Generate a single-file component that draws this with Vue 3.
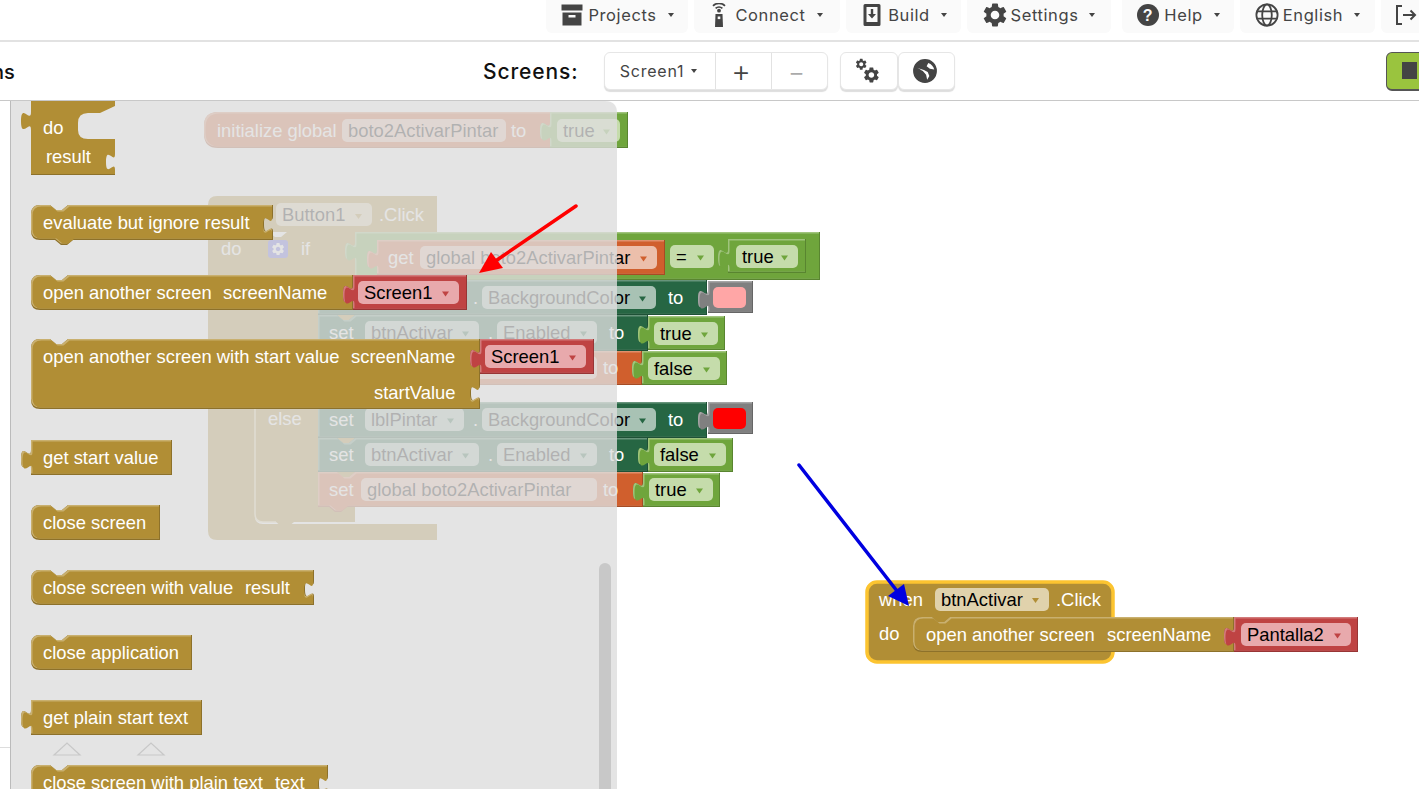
<script setup>
const COL = {
  gold: ['#B18E35', '#c9b06f', '#8d712a'],
  red: ['#BF4343', '#d27b7b', '#983535'],
  green: ['#6FA53C', '#a0c47d', '#598530'],
  orange: ['#D05F2D', '#e0906c', '#a64c24'],
  teal: ['#266643', '#67947b', '#1e5136'],
  gray: ['#808080', '#a6a6a6', '#666666']
}
const FIELD = { gold: '#e0d2ac', red: '#e8a9ac', green: '#c5dcab', orange: '#ecbfab', teal: '#a8c2b4', gray: '#cccccc' }

function shape(b, dx = 0, dy = 0, dw = 0, dh = 0) {
  const x = b.x + dx, y = b.y + dy, w = b.w + dw, h = b.h + dh
  const r = b.round === true ? 9 : b.round
  let d = r ? `M${x},${y + r} Q${x},${y} ${x + r},${y}` : `M${x},${y}`
  if (b.notch) d += ` H${x + 19} l6,5 h6 l6,-5`
  d += ` H${x + w}`
  for (const s of b.sockets || []) {
    d += ` V${y + s} v4 c0,11 -9,-9 -9,8 s9,-3 9,8`
  }
  d += ` V${y + h}`
  if (b.drop) d += ` H${x + b.drop + 18} l-6,5 h-6 l-6,-5`
  if (r) d += ` H${x + r} Q${x},${y + h} ${x},${y + h - r}`
  else d += ` H${x}`
  if (b.tab !== undefined) d += ` V${y + b.tab + 21} c0,-12 -10,10 -10,-9 s10,3 10,-9`
  return d + ' Z'
}

function block(color, x, y, w, h, opts = {}, labels = [], fields = []) {
  const b = { color, x, y, w, h, ...opts, labels, fields }
  const off = opts.row ?? 0
  b.fill = COL[color]
  b.outer = shape(b)
  b.light = shape(b, 0, 0, -1, -1.5)
  b.inner = shape(b, 1.5, 1.5, -2.5, -3)
  b.base = y + off + 23.5
  b.fieldFill = FIELD[color]
  b.fieldTop = y + off + 6
  return b
}
const L = (x, t) => ({ x, t })
const F = (x, w, t, arrow = true) => ({ x, w, t, arrow })

const eventPath = 'M208,205 Q208,196 217,196 H437 V232 H255 V516 Q255,524 263,524 H437 V540 H217 Q208,540 208,531 Z'
const ifPath = 'M255,240 Q255,232 263,232 H269 l6,5 h6 l6,-5 H355 V522 H294 l-6,5 h-6 l-6,-5 H263 Q255,522 255,514 Z'
const doPath = 'M31,95 H115 V106 L100,113 H88 Q78,113 78,123 V130 Q78,139 88,139 H115 V150 v4 c0,11 -9,-9 -9,8 s9,-3 9,8 V174 H31 V130 c0,-12 -10,10 -10,-9 s10,3 10,-9 Z'

const behind = [
  block('orange', 204, 112, 350, 36, { round: 14, row: 1 }, [L(217, 'initialize global'), L(511, 'to')], [F(342, 164, 'boto2ActivarPintar', false)]),
  block('green', 550, 112, 78, 36, { tab: 7, row: 1 }, [], [F(557, 63, 'true')]),
  block('green', 355, 232, 465, 48, { tab: 7, row: 7 }, [], [F(670, 44, '=')]),
  block('orange', 377, 240, 288, 35, { tab: 7 }, [L(388, 'get')], [F(420, 237, 'global boto2ActivarPintar')]),
  block('green', 728, 239, 78, 34, { tab: 7 }, [], [F(736, 62, 'true')]),
  block('teal', 318, 280, 389, 35, { notch: true }, [L(329, 'set'), L(473, '.'), L(668, 'to')], [F(365, 99, 'lblPintar'), F(482, 174, 'BackgroundColor')]),
  block('gray', 708, 281, 45, 32, { tab: 6 }, [], []),
  block('teal', 318, 315, 330, 36, { notch: true }, [L(329, 'set'), L(488, '.'), L(609, 'to')], [F(365, 114, 'btnActivar'), F(497, 100, 'Enabled')]),
  block('green', 648, 316, 77, 34, { tab: 6 }, [], [F(654, 64, 'true')]),
  block('orange', 318, 351, 324, 34, { notch: true, row: -1 }, [L(329, 'set'), L(603, 'to')], [F(361, 236, 'global boto2ActivarPintar')]),
  block('green', 642, 351, 85, 34, { tab: 6 }, [], [F(648, 72, 'false')]),
  block('teal', 318, 402, 389, 36, {}, [L(329, 'set'), L(473, '.'), L(668, 'to')], [F(365, 99, 'lblPintar'), F(482, 174, 'BackgroundColor')]),
  block('gray', 708, 402, 45, 32, { tab: 6 }, [], []),
  block('teal', 318, 438, 330, 34, { notch: true, row: -1 }, [L(329, 'set'), L(488, '.'), L(609, 'to')], [F(365, 114, 'btnActivar'), F(497, 100, 'Enabled')]),
  block('green', 648, 438, 85, 34, { tab: 6, row: -1 }, [], [F(654, 72, 'false')]),
  block('orange', 318, 472, 325, 35, { notch: true, drop: 11 }, [L(329, 'set'), L(603, 'to')], [F(361, 236, 'global boto2ActivarPintar', false)]),
  block('green', 643, 473, 77, 34, { tab: 6, row: -1 }, [], [F(649, 64, 'true')])
]

const palette = [
  block('gold', 31, 205, 242, 35, { round: true, notch: true, drop: 24, sockets: [7] }, [L(43, 'evaluate but ignore result')]),
  block('gold', 31, 275, 322, 35, { round: true, notch: true }, [L(43, 'open another screen'), L(223, 'screenName')]),
  block('red', 353, 275, 114, 35, { tab: 7 }, [], [F(358, 101, 'Screen1')]),
  block('gold', 31, 339, 449, 70, { round: true, notch: true, sockets: [42] }, [L(43, 'open another screen with start value'), L(351, 'screenName')]),
  block('red', 480, 339, 114, 35, { tab: 7 }, [], [F(485, 101, 'Screen1')]),
  block('gold', 31, 440, 141, 35, { tab: 7 }, [L(43, 'get start value')]),
  block('gold', 31, 505, 129, 35, { round: true, notch: true }, [L(43, 'close screen')]),
  block('gold', 31, 570, 283, 35, { round: true, notch: true, sockets: [7] }, [L(43, 'close screen with value'), L(245, 'result')]),
  block('gold', 31, 635, 161, 35, { round: true, notch: true }, [L(43, 'close application')]),
  block('gold', 31, 700, 171, 35, { tab: 7 }, [L(43, 'get plain start text')]),
  block('gold', 31, 765, 297, 35, { round: true, notch: true, sockets: [7] }, [L(43, 'close screen with plain text'), L(275, 'text')])
]

const when = [
  block('gold', 913, 617, 321, 35, { round: true, notch: true }, [L(926, 'open another screen'), L(1107, 'screenName')]),
  block('red', 1234, 617, 124, 35, { tab: 7 }, [], [F(1241, 110, 'Pantalla2')])
]

const nav = [
  { label: 'Projects', icon: 'box', cls: 'w-projects' },
  { label: 'Connect', icon: 'tower', cls: 'w-connect' },
  { label: 'Build', icon: 'phone', cls: 'w-build' },
  { label: 'Settings', icon: 'gear', cls: 'w-settings' },
  { label: 'Help', icon: 'help', cls: 'w-help' },
  { label: 'English', icon: 'globe', cls: 'w-english' }
]
const GEAR = 'M19.14 12.94c.04-.3.06-.61.06-.94 0-.32-.02-.64-.07-.94l2.03-1.58a.49.49 0 0 0 .12-.61l-1.92-3.32a.488.488 0 0 0-.59-.22l-2.39.96c-.5-.38-1.03-.7-1.62-.94l-.36-2.54a.484.484 0 0 0-.48-.41h-3.84c-.24 0-.43.17-.47.41l-.36 2.54c-.59.24-1.13.57-1.62.94l-2.39-.96c-.22-.08-.47 0-.59.22L2.74 8.87c-.12.21-.08.47.12.61l2.03 1.58c-.05.3-.09.63-.09.94s.02.64.07.94l-2.03 1.58a.49.49 0 0 0-.12.61l1.92 3.32c.12.22.37.29.59.22l2.39-.96c.5.38 1.03.7 1.62.94l.36 2.54c.05.24.24.41.48.41h3.84c.24 0 .44-.17.47-.41l.36-2.54c.59-.24 1.13-.56 1.62-.94l2.39.96c.22.08.47 0 .59-.22l1.92-3.32c.12-.22.07-.47-.12-.61l-2.01-1.58zM12 15.6c-1.98 0-3.6-1.62-3.6-3.6s1.62-3.6 3.6-3.6 3.6 1.62 3.6 3.6-1.62 3.6-3.6 3.6z'
</script>

<template>
  <div class="page">
    <header class="nav">
      <button v-for="n in nav" :key="n.label" class="nav-btn" :class="n.cls">
        <svg class="ico" viewBox="0 0 24 24">
          <template v-if="n.icon === 'box'">
            <path d="M1.5 1.5h21v6h-21z" />
            <path fill-rule="evenodd" d="M2.5 9.5h19v13h-19zM8.5 12v2.5h7V12z" />
          </template>
          <template v-else-if="n.icon === 'tower'">
            <path d="M8.5 11h7l.5 13H8z" />
            <rect x="10.7" y="13.5" width="2.6" height="2.6" fill="#fafafa" />
            <circle cx="12" cy="7.7" r="1.9" />
            <path class="line" d="M8.6 5.4a5 5 0 0 1 6.8 0M6 2.8a8.6 8.6 0 0 1 12 0" stroke-width="1.7" />
          </template>
          <template v-else-if="n.icon === 'phone'">
            <path fill-rule="evenodd" d="M5 1h14a1.5 1.5 0 0 1 1.5 1.5v19A1.5 1.5 0 0 1 19 23H5a1.5 1.5 0 0 1-1.5-1.5v-19A1.5 1.5 0 0 1 5 1zM6.5 4v15h11V4z" />
            <path d="M10.8 6h2.4v5h2.8L12 15.5 8 11h2.8z" />
          </template>
          <path v-else-if="n.icon === 'gear'" :d="GEAR" transform="translate(-2.4 -2.4) scale(1.2)" />
          <template v-else-if="n.icon === 'help'">
            <circle cx="12" cy="12" r="11" />
            <text x="12" y="18" class="qmark">?</text>
          </template>
          <g v-else class="line" stroke-width="1.8">
            <circle cx="12" cy="12" r="10.6" />
            <ellipse cx="12" cy="12" rx="4.8" ry="10.6" />
            <path d="M1.6 8.4h20.8M1.6 15.6h20.8" />
          </g>
        </svg>
        <span>{{ n.label }}</span>
        <i class="caret"></i>
      </button>
      <button class="nav-btn logout">
        <svg class="ico" viewBox="0 0 24 24">
          <path class="line" stroke-width="2" d="M8 3H3v18h5M9 12h12M16.5 7.5L21 12l-4.5 4.5" />
        </svg>
      </button>
    </header>

    <div class="toolbar">
      <span class="cut">ns</span>
      <span class="screens">Screens:</span>
      <div class="group">
        <div class="cell pick">Screen1<i class="caret"></i></div>
        <div class="cell plus">+</div>
        <div class="cell minus">−</div>
      </div>
      <div class="tool first">
        <svg class="tool-ico" viewBox="0 0 24 24">
          <path :d="GEAR" transform="translate(6.5 7) scale(.72)" />
          <path :d="GEAR" transform="translate(-.5 -.5) scale(.52)" />
        </svg>
      </div>
      <div class="tool">
        <svg class="tool-ico" viewBox="0 0 24 24">
          <path fill-rule="evenodd" d="M12 1a11 11 0 1 1 0 22 11 11 0 0 1 0-22zM4.5 9c2.500.5 3.500 2.500 5.500 3l3 3.500 1 4.500 2-3.500-1.500-3.500-3.500-2zM15 4.500l-1.500 3 3 2.500 4 .5c-.5-2.500-2.500-5-5.500-6z" />
        </svg>
      </div>
      <div class="run"><i></i></div>
    </div>

    <svg class="canvas" viewBox="0 101 1419 688">
      <!-- workspace -->
      <path :d="eventPath" fill="#B18E35" />
      <path :d="ifPath" fill="#B18E35" />
      <path d="M255,400 V514 Q255,522 263,522 H276" fill="none" stroke="#e8d9a8" stroke-width="1.5" />
      <rect x="276" y="203" width="96" height="23" rx="5" fill="#e0d2ac" />
      <text x="282" y="221" class="ft">Button1</text>
      <path d="M355,214 h7 l-3.5,5 z" fill="#B18E35" />
      <text x="379" y="221" class="bt">.Click</text>
      <text x="221" y="255" class="bt">do</text>
      <rect x="268" y="240" width="20" height="18" rx="3" fill="#5a5ae0" />
      <path :d="GEAR" fill="#fff" transform="translate(270.5 241.500) scale(.63)" />
      <text x="301" y="255" class="bt">if</text>
      <text x="268" y="425" class="bt">else</text>

      <g v-for="(b, i) in behind" :key="'b' + i">
        <path :d="b.outer" :fill="b.fill[2]" />
        <path :d="b.light" :fill="b.fill[1]" />
        <path :d="b.inner" :fill="b.fill[0]" />
        <text v-for="l in b.labels" :key="l.t + l.x" :x="l.x" :y="b.base" class="bt">{{ l.t }}</text>
        <g v-for="f in b.fields" :key="f.t + f.x">
          <rect :x="f.x" :y="b.fieldTop" :width="f.w" height="23" rx="5" :fill="b.fieldFill" />
          <text :x="f.x + 6" :y="b.base" class="ft">{{ f.t }}</text>
          <path v-if="f.arrow" :d="`M${f.x + f.w - 17},${b.base - 7} h7 l-3.5,5 z`" :fill="b.fill[0]" />
        </g>
      </g>
      <rect x="713" y="287" width="33" height="21" rx="5" fill="#ffa6a6" />
      <rect x="713" y="408" width="33" height="21" rx="5" fill="#ff0000" />

      <!-- selected event -->
      <rect x="867" y="582" width="246" height="80" rx="10" fill="#B18E35" stroke="#fcc430" stroke-width="3.5" />
      <rect x="935" y="588" width="114" height="23" rx="5" fill="#e0d2ac" />
      <text x="879" y="606" class="bt">when</text>
      <text x="941" y="606" class="ft">btnActivar</text>
      <path d="M1032,598 h7 l-3.5,5 z" fill="#B18E35" />
      <text x="1056" y="606" class="bt">.Click</text>
      <text x="879" y="640" class="bt">do</text>
      <g v-for="(b, i) in when" :key="'w' + i">
        <path :d="b.outer" :fill="b.fill[2]" />
        <path :d="b.light" :fill="b.fill[1]" />
        <path :d="b.inner" :fill="b.fill[0]" />
        <text v-for="l in b.labels" :key="l.t" :x="l.x" :y="b.base" class="bt">{{ l.t }}</text>
        <g v-for="f in b.fields" :key="f.t">
          <rect :x="f.x" :y="b.fieldTop" :width="f.w" height="23" rx="5" :fill="b.fieldFill" />
          <text :x="f.x + 6" :y="b.base" class="ft">{{ f.t }}</text>
          <path :d="`M${f.x + f.w - 17},${b.base - 7} h7 l-3.5,5 z`" :fill="b.fill[0]" />
        </g>
      </g>

      <!-- left gutter -->
      <path d="M0,747.5 H10" stroke="#ddd" />

      <!-- flyout -->
      <path d="M11,101 H605 Q617,101 617,113 V789 H11 Z" fill="#dddddd" fill-opacity=".8" />
      <path d="M10.5,101 V789" stroke="#bbb" />
      <rect x="599" y="563" width="12" height="240" rx="6" fill="#c8c8c8" />
      <g fill="none" stroke="#c8c8c8" stroke-width="1.2">
        <path d="M54,755 L67,743 L80,755 Z" />
        <path d="M138,755 L151,743 L164,755 Z" />
      </g>

      <path d="M31,172 H115 V175 H31 Z" fill="#8d712a" />
      <path :d="doPath" fill="#B18E35" />
      <text x="43" y="134" class="bt">do</text>
      <text x="46" y="163" class="bt">result</text>

      <g v-for="(b, i) in palette" :key="'p' + i">
        <path :d="b.outer" :fill="b.fill[2]" />
        <path :d="b.light" :fill="b.fill[1]" />
        <path :d="b.inner" :fill="b.fill[0]" />
        <text v-for="l in b.labels" :key="l.t" :x="l.x" :y="b.base" class="bt">{{ l.t }}</text>
        <g v-for="f in b.fields" :key="f.t">
          <rect :x="f.x" :y="b.fieldTop" :width="f.w" height="23" rx="5" :fill="b.fieldFill" />
          <text :x="f.x + 6" :y="b.base" class="ft">{{ f.t }}</text>
          <path :d="`M${f.x + f.w - 17},${b.base - 7} h7 l-3.5,5 z`" :fill="b.fill[0]" />
        </g>
      </g>
      <text x="374" y="399" class="bt">startValue</text>

      <!-- annotations -->
      <path d="M576,206 L497,260" stroke="#f00" stroke-width="3.5" stroke-linecap="round" />
      <path d="M479,273 L491,252 L503,268 Z" fill="#f00" />
      <path d="M799,465 L897,591" stroke="#0000e0" stroke-width="3.5" stroke-linecap="round" />
      <path d="M909,606 L888,596 L904,584 Z" fill="#0000e0" />
    </svg>
  </div>
</template>

<style scoped>
.page {
  height: 789px;
  display: flex;
  flex-direction: column;
  overflow: hidden;
  background: #fff;
  font-family: "Inter", "Noto Sans", sans-serif;
  color: #333;
}
.nav {
  height: 40px;
  flex: none;
  display: flex;
  gap: 6px;
  padding-left: 546px;
  border-bottom: 2px solid #e2e2e2;
  overflow: hidden;
}
.nav-btn {
  height: 33px;
  flex: none;
  box-sizing: border-box;
  border: 0;
  border-radius: 0 0 6px 6px;
  background: #fafafa;
  display: flex;
  align-items: center;
  justify-content: center;
  gap: 4px;
  padding: 0 0 4px;
  font: 400 16.5px "Inter", sans-serif;
  letter-spacing: .6px;
  color: #444;
}
.w-projects { width: 142px; }
.w-connect { width: 146px; padding-right: 4px; }
.w-build { width: 115px; }
.w-settings { width: 144px; }
.w-help { width: 112px; margin-left: 5px; }
.w-english { width: 135px; }
.logout { width: 60px; justify-content: flex-start; padding-left: 13px; }
.ico { width: 24px; height: 24px; fill: #444; flex: none; }
.line { fill: none; stroke: #444; }
.qmark { font: 700 16px "Liberation Sans", sans-serif; fill: #fafafa; text-anchor: middle; }
.caret {
  display: inline-block;
  width: 0;
  height: 0;
  margin-left: 7px;
  border-left: 3px solid transparent;
  border-right: 3px solid transparent;
  border-top: 4px solid #444;
}
.toolbar {
  height: 59px;
  flex: none;
  box-sizing: border-box;
  border-bottom: 1px solid #c8c8c8;
  display: flex;
  align-items: center;
  overflow: hidden;
}
.cut {
  width: 483px;
  flex: none;
  box-sizing: border-box;
  margin-top: 2px;
  text-indent: -8px;
  font-size: 20px;
  font-weight: 500;
  color: #111;
}
.screens {
  width: 121px;
  flex: none;
  font-size: 21px;
  font-weight: 500;
  letter-spacing: .9px;
  color: #111;
}
.group, .tool {
  display: flex;
  flex: none;
  height: 38px;
  box-sizing: border-box;
  background: #fff;
  border: 1px solid #e6e6e6;
  border-radius: 6px;
  box-shadow: 0 2px 1px #ddd;
}
.group { width: 224px; }
.tool { width: 57px; align-items: center; justify-content: center; }
.first { margin-left: 12px; width: 58px; }
.cell {
  display: flex;
  align-items: center;
  justify-content: center;
  box-sizing: border-box;
  border-right: 1px solid #e2e2e2;
  font-size: 16px;
  letter-spacing: .8px;
  color: #444;
}
.cell:last-child { border-right: 0; }
.pick { width: 111px; flex: none; padding-right: 3px; }
.plus { width: 56px; flex: none; padding-right: 4px; font-size: 30px; font-weight: 300; }
.minus { flex: 1; padding-right: 5px; font-size: 26px; font-weight: 300; color: #aaa; }
.tool-ico { width: 26px; height: 26px; fill: #444; margin-right: 3px; }
.run {
  width: 60px;
  height: 39px;
  flex: none;
  box-sizing: border-box;
  margin-left: 431px;
  background: #9ac43e;
  border: 1px solid #555;
  border-bottom-width: 2px;
  border-radius: 6px;
  display: flex;
  align-items: center;
  padding-left: 15px;
}
.run i { width: 15px; height: 17px; background: #444; display: block; }
.canvas { width: 1419px; height: 688px; display: block; flex: none; }
.bt { font: 400 18.4px "Liberation Sans", sans-serif; fill: #fff; }
.ft { font: 400 18.4px "Liberation Sans", sans-serif; fill: #000; }
</style>

<style>
html, body { margin: 0; overflow: hidden; background: #fff; }
</style>
